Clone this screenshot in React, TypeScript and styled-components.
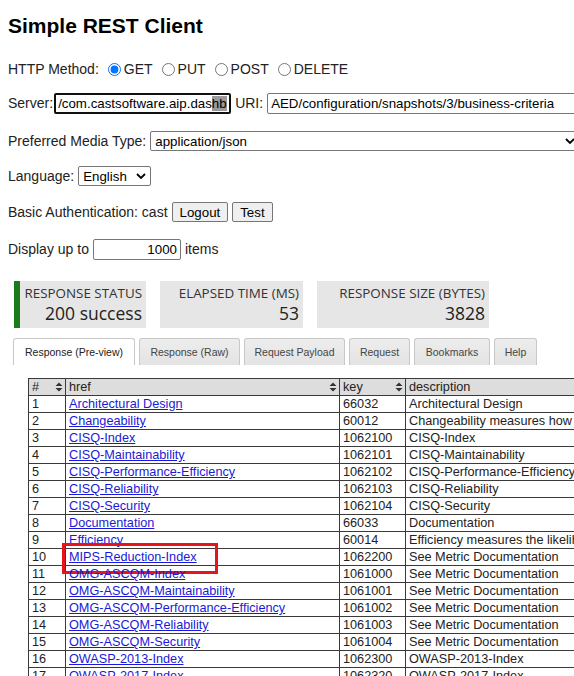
import React from 'react';
import styled, { createGlobalStyle } from 'styled-components';

const GlobalStyle = createGlobalStyle`
  html, body {
    margin: 0;
    padding: 0;
    background: #ffffff;
    overflow: hidden;
  }
  body {
    font-family: 'Liberation Sans', Arial, sans-serif;
    font-size: 14px;
    color: #222222;
  }
`;

const Page = styled.div`
  width: 574px;
  height: 676px;
  padding: 0 0 0 8px;
  box-sizing: border-box;
  overflow: hidden;
`;

const Title = styled.h2`
  margin: 14px 0 0;
  font-size: 21px;
  line-height: 24px;
  font-weight: 700;
  color: #000000;
`;

const Row = styled.div<{ $top?: number }>`
  display: flex;
  align-items: center;
  height: 22px;
  margin-top: ${p => p.$top ?? 14}px;
  white-space: nowrap;
  gap: 4px;
`;

const RadioLabel = styled.label`
  display: inline-flex;
  align-items: center;

  input {
    margin: 0 3px 0 5px;
    width: 13px;
    height: 13px;
  }
`;

const FakeInput = styled.div<{ $width: number; $focused?: boolean }>`
  box-sizing: border-box;
  width: ${p => p.$width}px;
  flex: none;
  height: 21px;
  border: ${p => (p.$focused ? '2px solid #101010' : '1px solid #767676')};
  border-radius: 2px;
  padding: 0 ${p => (p.$focused ? 2 : 3)}px;
  font-size: 13.3px;
  line-height: ${p => (p.$focused ? 17 : 19)}px;
  color: #000000;
  overflow: hidden;
  white-space: nowrap;
`;

const Selected = styled.span`
  background: #9a9a9a;
`;

const Select = styled.div<{ $width: number }>`
  box-sizing: border-box;
  flex: none;
  width: ${p => p.$width}px;
  height: 20px;
  border: 1px solid #767676;
  border-radius: 2px;
  padding: 0 4px;
  display: flex;
  align-items: center;
  justify-content: space-between;
  font-size: 13.3px;
  color: #000000;
`;

const Button = styled.button`
  height: 20px;
  padding: 0 7px;
  font-family: inherit;
  font-size: 13.3px;
  color: #000000;
  background: #efefef;
  border: 1px solid #767676;
  border-radius: 2px;
`;

const NumberInput = styled.div`
  box-sizing: border-box;
  width: 88px;
  height: 21px;
  border: 1px solid #767676;
  border-radius: 2px;
  padding: 0 3px;
  text-align: right;
  font-size: 13.3px;
  line-height: 19px;
  color: #000000;
`;

const Stats = styled.div`
  display: flex;
  gap: 14px;
  margin: 21px 0 0 6px;
  font-family: 'Open Sans', 'DejaVu Sans', sans-serif;
`;

const StatBox = styled.div<{ $accent?: string; $width: number }>`
  width: ${p => p.$width}px;
  background: #e6e6e6;
  border-left: 6px solid ${p => p.$accent ?? '#e6e6e6'};
  padding: 4px;
  height: 47px;
  box-sizing: border-box;
  display: flex;
  flex-direction: column;
  align-items: flex-end;
`;

const StatLabel = styled.div`
  font-size: 13.4px;
  line-height: 17px;
  color: #333333;
`;

const StatValue = styled.div`
  font-size: 17.5px;
  line-height: 22px;
  color: #222222;
`;

const Tabs = styled.div`
  display: flex;
  gap: 4px;
  margin: 10px 0 0 5px;
`;

const Tab = styled.div<{ $active?: boolean; $width: number }>`
  width: ${p => p.$width}px;
  height: 27px;
  box-sizing: border-box;
  display: flex;
  align-items: center;
  justify-content: center;
  white-space: nowrap;
  font-size: 10.5px;
  color: ${p => (p.$active ? '#222222' : '#454545')};
  background: ${p => (p.$active ? '#ffffff' : 'linear-gradient(#ededed, #e3e3e3)')};
  border: 1px solid #c8c8c8;
  border-bottom: none;
  border-radius: 3px 3px 0 0;
`;

const Table = styled.table`
  margin: 13px 0 0 20px;
  border-collapse: collapse;
  table-layout: fixed;
  width: 640px;
  font-size: 12.7px;
  color: #222222;

  th, td {
    border: 1px solid #3a3a3a;
    height: 16px;
    padding: 0 2px 0 3px;
    line-height: 16px;
    white-space: nowrap;
    overflow: hidden;
    text-align: left;
  }

  th {
    background: #dddddd;
    font-weight: 400;
  }
`;

const HeadCell = styled.div`
  display: flex;
  justify-content: space-between;
  align-items: center;
`;

const LinkCell = styled.td`
  position: relative;
  overflow: visible !important;
`;

const Link = styled.a`
  color: #1a1ad6;
  text-decoration: underline;
`;

const Highlight = styled.div`
  position: absolute;
  left: -4px;
  top: -6px;
  width: 156px;
  height: 31px;
  box-sizing: border-box;
  border: 3px solid #e8141c;
  pointer-events: none;
`;

const SortIcon = () => (
  <svg width="8" height="10" viewBox="0 0 8 10">
    <path d="M4 0.5 L7.5 4 L0.5 4 Z M4 9.5 L7.5 6 L0.5 6 Z" fill="#333" />
  </svg>
);

const Chevron = () => (
  <svg width="10" height="6" viewBox="0 0 10 6">
    <path d="M1 1 L5 5 L9 1" stroke="#000" strokeWidth="1.8" fill="none" />
  </svg>
);

const rows: [string, string, string][] = [
  ['Architectural Design', '66032', 'Architectural Design'],
  ['Changeability', '60012', 'Changeability measures how easily applications can be modified'],
  ['CISQ-Index', '1062100', 'CISQ-Index'],
  ['CISQ-Maintainability', '1062101', 'CISQ-Maintainability'],
  ['CISQ-Performance-Efficiency', '1062102', 'CISQ-Performance-Efficiency'],
  ['CISQ-Reliability', '1062103', 'CISQ-Reliability'],
  ['CISQ-Security', '1062104', 'CISQ-Security'],
  ['Documentation', '66033', 'Documentation'],
  ['Efficiency', '60014', 'Efficiency measures the likelihood of potential performance bottlenecks'],
  ['MIPS-Reduction-Index', '1062200', 'See Metric Documentation'],
  ['OMG-ASCQM-Index', '1061000', 'See Metric Documentation'],
  ['OMG-ASCQM-Maintainability', '1061001', 'See Metric Documentation'],
  ['OMG-ASCQM-Performance-Efficiency', '1061002', 'See Metric Documentation'],
  ['OMG-ASCQM-Reliability', '1061003', 'See Metric Documentation'],
  ['OMG-ASCQM-Security', '1061004', 'See Metric Documentation'],
  ['OWASP-2013-Index', '1062300', 'OWASP-2013-Index'],
  ['OWASP-2017-Index', '1062320', 'OWASP-2017-Index'],
  ['Programming-Practices', '66062', 'Programming Practices'],
];

const tabs: [string, number][] = [
  ['Response (Pre-view)', 122],
  ['Response (Raw)', 101],
  ['Request Payload', 101],
  ['Request', 61],
  ['Bookmarks', 76],
  ['Help', 43],
];

export default function App() {
  return (
    <Page>
      <GlobalStyle />
      <Title>Simple REST Client</Title>

      <Row $top={20}>
        HTTP Method:
        <RadioLabel><input type="radio" name="m" defaultChecked />GET</RadioLabel>
        <RadioLabel><input type="radio" name="m" />PUT</RadioLabel>
        <RadioLabel><input type="radio" name="m" />POST</RadioLabel>
        <RadioLabel><input type="radio" name="m" />DELETE</RadioLabel>
      </Row>

      <Row $top={12}>
        Server:
        <FakeInput $width={177} $focused style={{ marginLeft: -3 }}>
          /com.castsoftware.aip.das<Selected>hb</Selected>
        </FakeInput>
        URI:
        <FakeInput $width={330}>AED/configuration/snapshots/3/business-criteria</FakeInput>
      </Row>

      <Row $top={16}>
        Preferred Media Type:
        <Select $width={430}>
          application/json
          <Chevron />
        </Select>
      </Row>

      <Row $top={13}>
        Language:
        <Select $width={73}>
          English
          <Chevron />
        </Select>
      </Row>

      <Row>
        Basic Authentication: cast
        <Button>Logout</Button>
        <Button>Test</Button>
      </Row>

      <Row $top={15}>
        Display up to
        <NumberInput>1000</NumberInput>
        items
      </Row>

      <Stats>
        <StatBox $accent="#1b7a1b" $width={132}>
          <StatLabel>RESPONSE STATUS</StatLabel>
          <StatValue>200 success</StatValue>
        </StatBox>
        <StatBox $width={143}>
          <StatLabel>ELAPSED TIME (MS)</StatLabel>
          <StatValue>53</StatValue>
        </StatBox>
        <StatBox $width={172}>
          <StatLabel>RESPONSE SIZE (BYTES)</StatLabel>
          <StatValue>3828</StatValue>
        </StatBox>
      </Stats>

      <Tabs>
        {tabs.map(([label, w], i) => (
          <Tab key={label} $width={w} $active={i === 0}>{label}</Tab>
        ))}
      </Tabs>

      <Table>
        <colgroup>
          <col style={{ width: 37 }} />
          <col style={{ width: 274 }} />
          <col style={{ width: 66 }} />
          <col style={{ width: 263 }} />
        </colgroup>
        <thead>
          <tr>
            <th><HeadCell>#<SortIcon /></HeadCell></th>
            <th><HeadCell>href<SortIcon /></HeadCell></th>
            <th><HeadCell>key<SortIcon /></HeadCell></th>
            <th>description</th>
          </tr>
        </thead>
        <tbody>
          {rows.map(([name, key, desc], i) => (
            <tr key={key}>
              <td>{i + 1}</td>
              <LinkCell>
                <Link href="#">{name}</Link>
                {i === 9 && <Highlight />}
              </LinkCell>
              <td>{key}</td>
              <td>{desc}</td>
            </tr>
          ))}
        </tbody>
      </Table>
    </Page>
  );
}
